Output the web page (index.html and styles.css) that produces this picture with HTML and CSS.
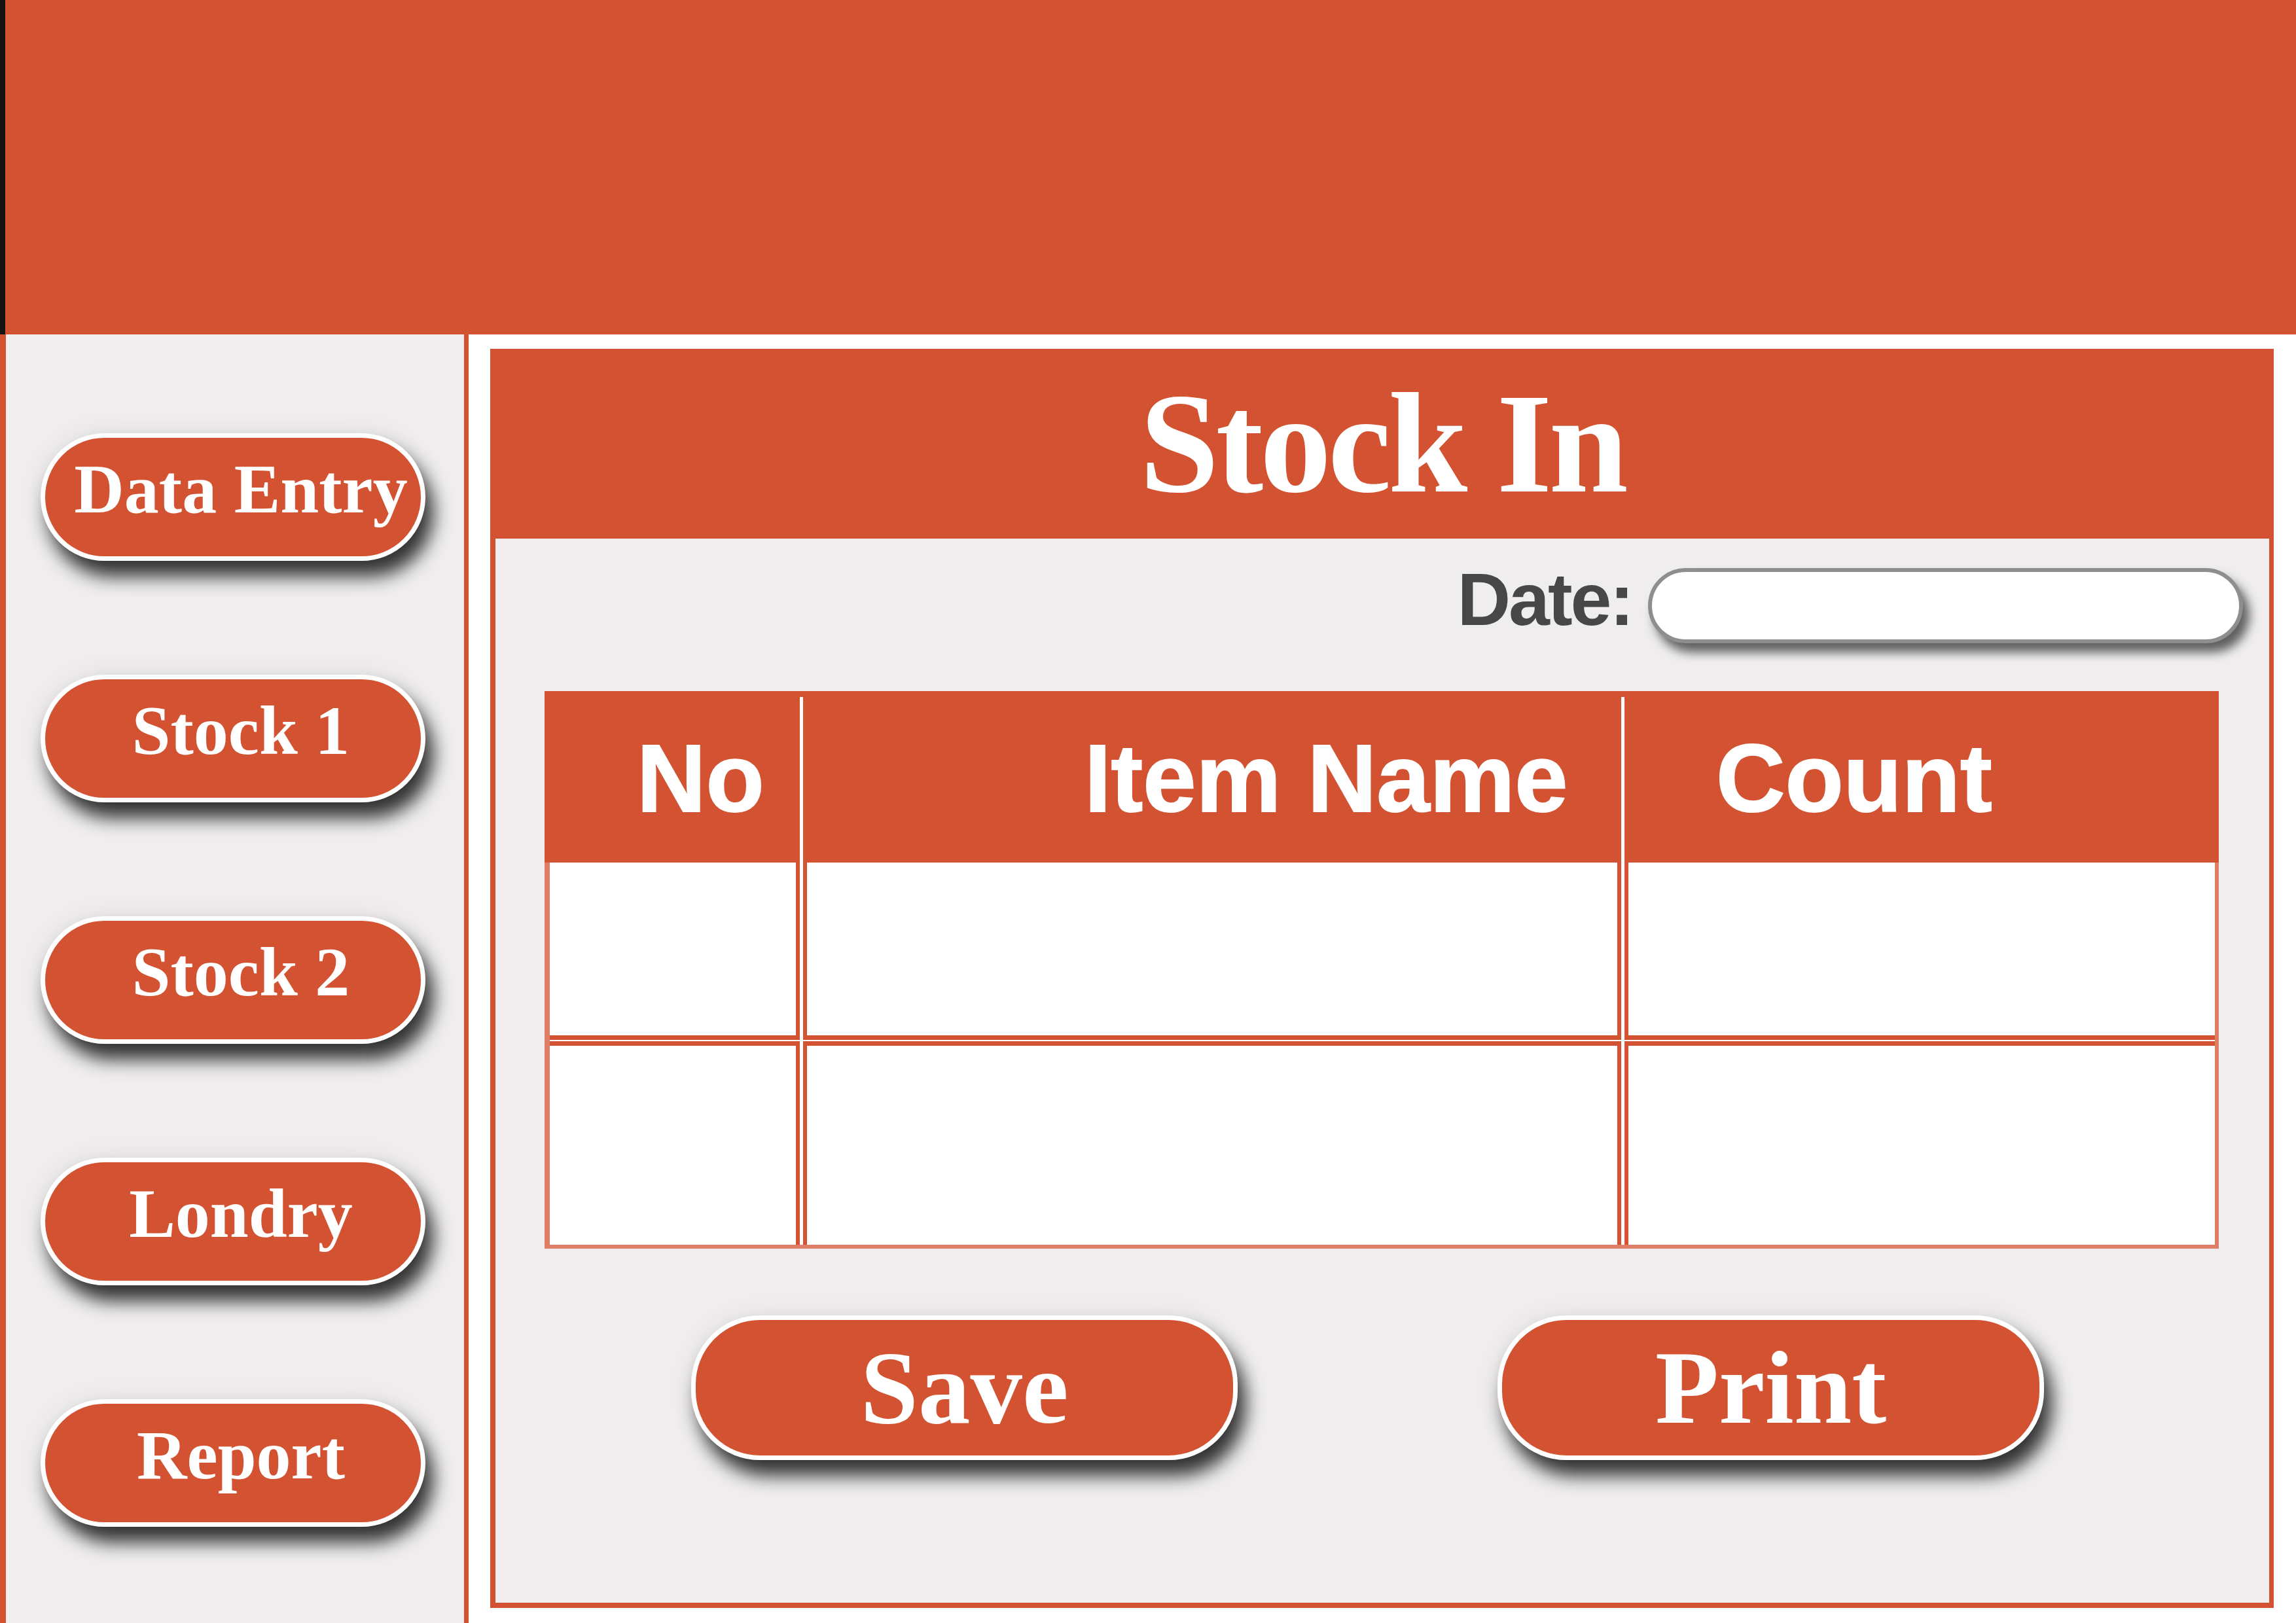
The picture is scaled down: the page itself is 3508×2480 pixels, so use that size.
FILE: index.html
```html
<!DOCTYPE html>
<html lang="en">
<head>
<meta charset="utf-8">
<title>Stock In</title>
<link rel="stylesheet" href="styles.css">
</head>
<body>
<div class="app">
  <header class="topbar"></header>
  <div class="workspace">
    <nav class="sidebar">
      <button class="nav-btn">Data Entry</button>
      <button class="nav-btn">Stock 1</button>
      <button class="nav-btn">Stock 2</button>
      <button class="nav-btn">Londry</button>
      <button class="nav-btn">Report</button>
    </nav>
    <main class="panel">
      <div class="panel-title">Stock In</div>
      <div class="panel-body">
        <div class="date-row">
          <label class="date-label">Date:</label>
          <div class="date-input"></div>
        </div>
        <div class="table">
          <div class="thead">
            <div class="th th-no">No</div>
            <div class="th th-name">Item Name</div>
            <div class="th th-count">Count</div>
          </div>
          <div class="tbody">
            <div class="td r1 c1"></div>
            <div class="td r1 c2"></div>
            <div class="td r1 c3"></div>
            <div class="td r2 c1"></div>
            <div class="td r2 c2"></div>
            <div class="td r2 c3"></div>
          </div>
        </div>
        <div class="actions">
          <button class="act-btn">Save</button>
          <button class="act-btn">Print</button>
        </div>
      </div>
    </main>
  </div>
</div>
</body>
</html>
```

FILE: styles.css
```css
html, body {
  margin: 0;
  padding: 0;
  background: #ffffff;
}

.app {
  width: 3508px;
  height: 2480px;
  display: flex;
  flex-direction: column;
  overflow: hidden;
}

.topbar {
  flex: none;
  height: 511px;
  box-sizing: border-box;
  background: #d35232;
  border-left: 8px solid #141414;
}

.workspace {
  flex: 1;
  display: flex;
  align-items: stretch;
}

.sidebar {
  flex: none;
  width: 716px;
  box-sizing: border-box;
  background: #efeded;
  border-left: 9px solid #d35232;
  border-right: 7px solid #d35232;
  padding: 151px 0 0 53px;
  display: flex;
  flex-direction: column;
  align-items: flex-start;
  gap: 174px;
}

.nav-btn {
  width: 588px;
  height: 195px;
  box-sizing: border-box;
  margin: 0;
  padding: 0 0 24px 24px;
  border: 7px solid #ffffff;
  border-radius: 98px;
  background: #d35232;
  color: #ffffff;
  font-family: "Liberation Serif", "Times New Roman", serif;
  font-weight: bold;
  font-size: 106px;
  line-height: 1;
  white-space: nowrap;
  display: flex;
  align-items: center;
  justify-content: center;
  box-shadow: 12px 24px 28px rgba(0, 0, 0, 0.78), 0 0 40px rgba(0, 0, 0, 0.07);
}

.panel {
  flex: none;
  align-self: flex-start;
  margin: 22px 0 0 33px;
  width: 2725px;
  height: 1924px;
  box-sizing: border-box;
  border-style: solid;
  border-color: #d35232;
  border-width: 0 7px 8px 8px;
  background: #efeded;
  display: flex;
  flex-direction: column;
}

.panel-title {
  flex: none;
  height: 290px;
  background: #d35232;
  color: #ffffff;
  font-family: "Liberation Serif", "Times New Roman", serif;
  font-weight: bold;
  font-size: 218px;
  line-height: 1;
  letter-spacing: -5px;
  display: flex;
  align-items: center;
  justify-content: center;
}

.panel-body {
  flex: 1;
  padding: 45px 40px 0 0;
  display: flex;
  flex-direction: column;
}

.date-row {
  height: 115px;
  display: flex;
  justify-content: flex-end;
  align-items: center;
}

.date-label {
  margin-right: 24px;
  padding-bottom: 18px;
  color: #474747;
  font-family: "Liberation Sans", Arial, sans-serif;
  font-weight: bold;
  font-size: 113px;
  line-height: 1;
  letter-spacing: -3px;
}

.date-input {
  width: 909px;
  height: 115px;
  box-sizing: border-box;
  border: 6px solid #8e8e8e;
  border-radius: 58px;
  background: #ffffff;
  box-shadow: 10px 14px 16px rgba(0, 0, 0, 0.6);
}

.table {
  margin: 73px 0 0 75px;
  width: 2558px;
}

.thead {
  height: 262px;
  box-sizing: border-box;
  padding-top: 9px;
  background: #d35232;
  display: grid;
  grid-template-columns: 390px 1255px 913px;
}

.th {
  color: #ffffff;
  font-family: "Liberation Sans", Arial, sans-serif;
  font-weight: bold;
  font-size: 146px;
  line-height: 1;
  padding-top: 52px;
  white-space: nowrap;
  -webkit-text-stroke: 2px #ffffff;
}

.th-no {
  padding-left: 141px;
}

.th-name {
  border-left: 5px solid #ffffff;
  padding-left: 430px;
}

.th-count {
  border-left: 5px solid #ffffff;
  padding-left: 140px;
}

.tbody {
  display: grid;
  grid-template-columns: 382px 1250px 902px;
  grid-template-rows: 271px 311px;
  column-gap: 5px;
  row-gap: 2px;
  background: #ffffff;
  border-style: solid;
  border-color: #de7e65;
  border-width: 0 6px 6px 8px;
}

.td {
  box-sizing: border-box;
  background: #ffffff;
  border: 0 solid #d35232;
}

.r1 { border-bottom-width: 7px; }
.r2 { border-top-width: 7px; }
.c1 { border-right-width: 6px; }
.c2 { border-left-width: 6px; border-right-width: 6px; }
.c3 { border-left-width: 6px; }

.actions {
  margin-top: 102px;
  padding-left: 299px;
  display: flex;
  gap: 397px;
}

.act-btn {
  width: 835px;
  height: 221px;
  box-sizing: border-box;
  margin: 0;
  padding: 0;
  border: 7px solid #ffffff;
  border-radius: 105px;
  background: #d35232;
  color: #ffffff;
  font-family: "Liberation Serif", "Times New Roman", serif;
  font-weight: bold;
  font-size: 159px;
  line-height: 1;
  display: flex;
  align-items: center;
  justify-content: center;
  box-shadow: 12px 24px 28px rgba(0, 0, 0, 0.78), 0 0 40px rgba(0, 0, 0, 0.07);
}
```
